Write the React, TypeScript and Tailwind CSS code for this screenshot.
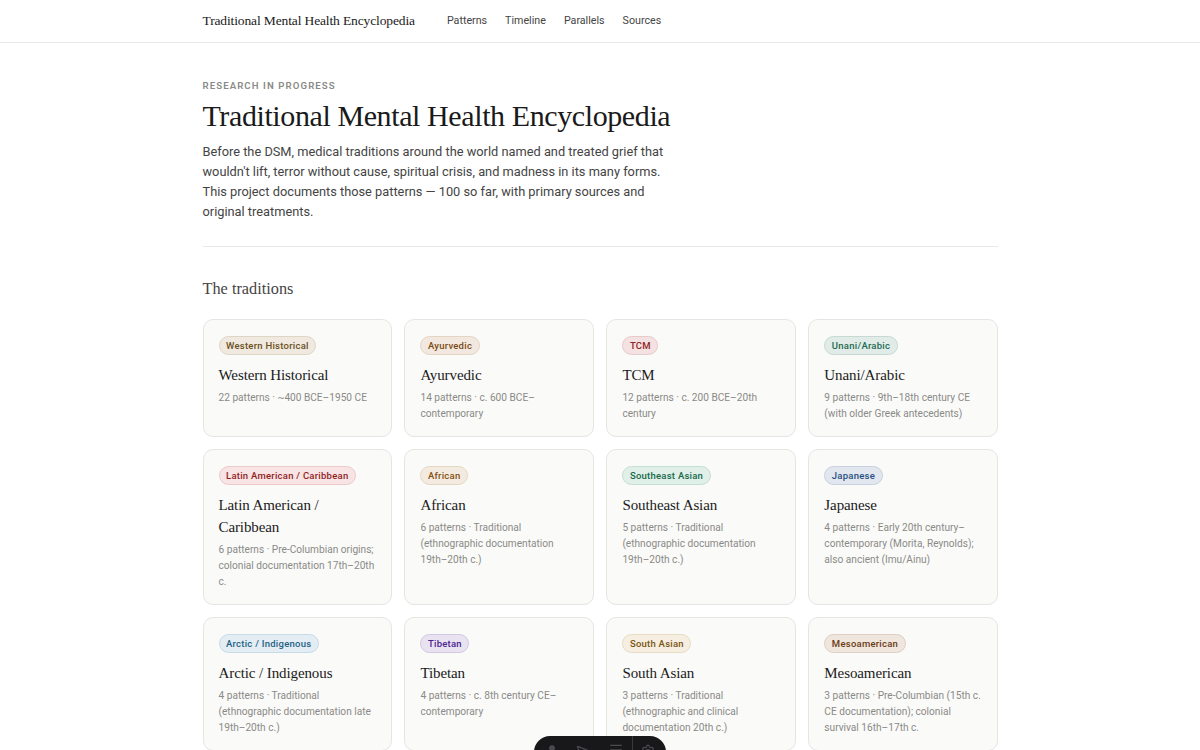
import { Menu, MousePointer2, Settings } from "lucide-react";

const sans = "font-['Roboto','Liberation_Sans',sans-serif]";
const serif = "font-['Liberation_Serif','DejaVu_Serif',serif]";

const navLinks = ["Patterns", "Timeline", "Parallels", "Sources"];

const traditions = [
  { name: "Western Historical", meta: "22 patterns · ~400 BCE–1950 CE", badge: "bg-[#efe9df] border-[#dfd5c5] text-[#6b4f1d]" },
  { name: "Ayurvedic", meta: "14 patterns · c. 600 BCE–contemporary", badge: "bg-[#f2e8df] border-[#e4d4c4] text-[#7a4a14]" },
  { name: "TCM", meta: "12 patterns · c. 200 BCE–20th century", badge: "bg-[#f4e1e1] border-[#e8caca] text-[#8f2424]" },
  { name: "Unani/Arabic", meta: "9 patterns · 9th–18th century CE (with older Greek antecedents)", badge: "bg-[#e1ece8] border-[#c6dad3] text-[#1f6b52]" },
  { name: "Latin American / Caribbean", meta: "6 patterns · Pre-Columbian origins; colonial documentation 17th–20th c.", badge: "bg-[#f8e4e4] border-[#edc9c9] text-[#8f1f1f]" },
  { name: "African", meta: "6 patterns · Traditional (ethnographic documentation 19th–20th c.)", badge: "bg-[#f4ebe0] border-[#e6d7c3] text-[#85500f]" },
  { name: "Southeast Asian", meta: "5 patterns · Traditional (ethnographic documentation 19th–20th c.)", badge: "bg-[#e0efe8] border-[#c5dfd2] text-[#17694a]" },
  { name: "Japanese", meta: "4 patterns · Early 20th century–contemporary (Morita, Reynolds); also ancient (Imu/Ainu)", badge: "bg-[#e2e7ef] border-[#c8d1df] text-[#274f80]" },
  { name: "Arctic / Indigenous", meta: "4 patterns · Traditional (ethnographic documentation late 19th–20th c.)", badge: "bg-[#e3edf3] border-[#c7dce7] text-[#1f6285]" },
  { name: "Tibetan", meta: "4 patterns · c. 8th century CE–contemporary", badge: "bg-[#e9e3f1] border-[#d3c7e2] text-[#4c2390]" },
  { name: "South Asian", meta: "3 patterns · Traditional (ethnographic and clinical documentation 20th c.)", badge: "bg-[#f5eee1] border-[#e8dbc3] text-[#7a5512]" },
  { name: "Mesoamerican", meta: "3 patterns · Pre-Columbian (15th c. CE documentation); colonial survival 16th–17th c.", badge: "bg-[#efe6de] border-[#dfcfc2] text-[#6b3a14]" },
];

function TraditionCard({ name, meta, badge }: { name: string; meta: string; badge: string }) {
  return (
    <div className="rounded-[10px] border border-[#e7e5e2] bg-[#fafaf9] pt-[16px] pr-[14px] pb-[14px] pl-[15px]">
      <span className={`block w-fit rounded-full border px-[6.5px] py-[2px] text-[9.5px] leading-[13px] font-medium tracking-[0.25px] ${badge}`}>
        {name}
      </span>
      <h3 className={`mt-[9px] text-[15px] leading-[22px] tracking-[-0.1px] text-[#1a1a1a] ${serif}`}>{name}</h3>
      <p className="mt-[4px] text-[10.15px] leading-[16px] text-[#8a8a86]">{meta}</p>
    </div>
  );
}

function Toolbar() {
  return (
    <div className="fixed bottom-[-22px] left-[534px] flex h-[36px] w-[132px] items-start rounded-[16px] bg-[#18181b] pl-[11px] text-[#4a4a4e]">
      <svg width="14" height="14" viewBox="0 0 24 24" fill="currentColor" className="mt-[8px]">
        <circle cx="12" cy="7" r="5" />
        <path d="M3 24c0-6 4-9 9-9s9 3 9 9z" />
      </svg>
      <MousePointer2 size={14} className="mt-[8px] ml-[16px]" />
      <Menu size={16} className="mt-[6px] ml-[19px]" />
      <div className="ml-[8px] h-full w-px bg-[#3a3a3e]" />
      <Settings size={14} className="mt-[8px] ml-[8px]" />
    </div>
  );
}

export default function App() {
  return (
    <div className={`h-[750px] overflow-hidden bg-white ${sans}`}>
      <nav className="h-[43px] border-b border-[#e8e8e6]">
        <div className="mx-auto flex h-full w-[795px] items-center">
          <span className={`text-[13.5px] tracking-[-0.13px] text-[#1a1a1a] ${serif}`}>Traditional Mental Health Encyclopedia</span>
          <div className="mt-[1px] ml-[32px] flex gap-[18px] text-[10.7px] text-[#444]">
            {navLinks.map((l) => (
              <span key={l}>{l}</span>
            ))}
          </div>
        </div>
      </nav>

      <main className="mx-auto w-[795px]">
        <header className="border-b border-[#e8e8e6] pt-[37px] pb-[24px]">
          <p className="text-[9.6px] leading-[12px] font-semibold tracking-[1.1px] text-[#8a8a86]">RESEARCH IN PROGRESS</p>
          <h1 className={`mt-[5px] text-[30px] leading-[38px] tracking-[-0.4px] text-[#1a1a1a] ${serif}`}>Traditional Mental Health Encyclopedia</h1>
          <p className="mt-[7px] w-[470px] text-[12.8px] leading-[20px] text-[#444]">
            Before the DSM, medical traditions around the world named and treated grief that wouldn't lift, terror without cause, spiritual crisis, and madness in its many forms. This project documents those patterns — 100 so far, with primary sources and original treatments.
          </p>
        </header>

        <section className="pt-[31px]">
          <h2 className={`text-[16.3px] leading-[22px] text-[#444] ${serif}`}>The traditions</h2>
          <div className="mt-[19px] grid grid-cols-4 gap-x-[12.8px] gap-y-[12px]">
            {traditions.map((t) => (
              <TraditionCard key={t.name} {...t} />
            ))}
          </div>
        </section>
      </main>
      <Toolbar />
    </div>
  );
}
